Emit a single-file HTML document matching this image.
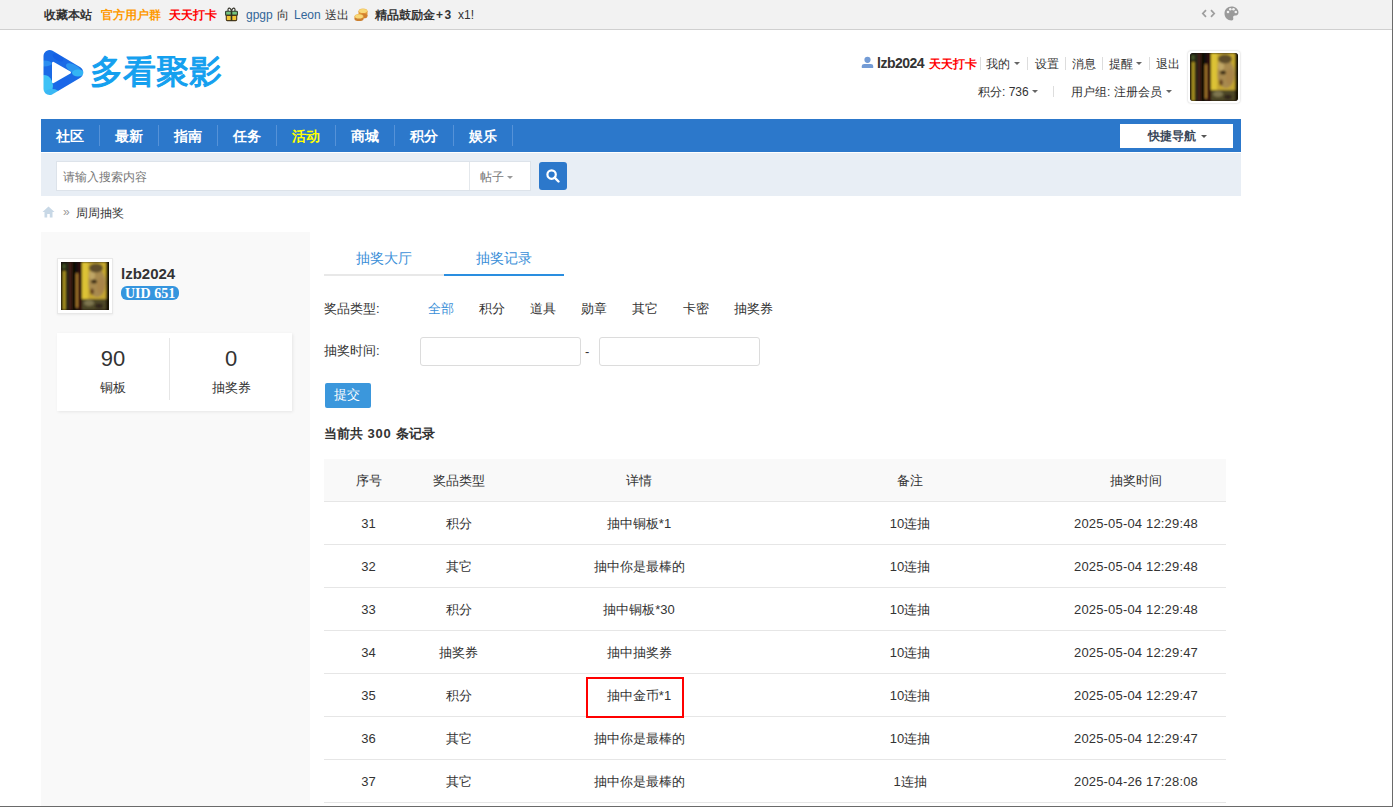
<!DOCTYPE html>
<html><head><meta charset="utf-8">
<style>
*{box-sizing:border-box}
html,body{margin:0;padding:0}
body{width:1393px;height:807px;overflow:hidden;position:relative;background:#fff;font-family:"Liberation Sans",sans-serif;font-size:12px;color:#333}
.a{position:absolute;white-space:nowrap}
.t12{font-size:12px;line-height:12px}
.t13{font-size:13px;line-height:13px}
.t14{font-size:14px;line-height:14px}
.b{font-weight:bold}
/* frame */
#rb{position:absolute;left:1392px;top:0;width:1px;height:807px;background:#6a6a6a}
#bb{position:absolute;left:0;top:806px;width:1393px;height:1px;background:#6a6a6a}
/* top bar */
#top{position:absolute;left:0;top:0;width:1392px;height:30px;background:#f2f2f2;border-bottom:1px solid #d0d0d0}
/* nav */
#nav{position:absolute;left:41px;top:119px;width:1200px;height:33px;background:#2c78cb}
#nav .i{position:absolute;top:10px;font-size:14px;line-height:14px;font-weight:bold;color:#fff}
#nav .s{position:absolute;top:6px;width:1px;height:21px;background:#5592d8}
#srch{position:absolute;left:41px;top:153px;width:1200px;height:43px;background:#e8eef5}
#side{position:absolute;left:41px;top:232px;width:269px;height:574px;background:#f9f9f9}
.caret{position:absolute;width:0;height:0;border-left:3px solid transparent;border-right:3px solid transparent;border-top:3px solid #666}
.sep{position:absolute;width:1px;background:#ddd}
.av{position:absolute;background:
 radial-gradient(ellipse 9px 15px at 34px 20px,#b89858 0%,#a88848 60%,rgba(160,130,60,0) 100%),
 linear-gradient(180deg,rgba(0,0,0,0) 70%,rgba(60,50,20,.8) 100%),
 linear-gradient(90deg,#120c06 0,#120c06 3px,#c9a422 3px,#c9a422 6px,#1c2410 6px,#1c2410 9px,#3a1a10 9px,#3a1a10 14px,#b5782a 14px,#b5782a 16px,#2a120a 16px,#2a120a 21px,#c8a428 21px,#d4b43a 30px,#b09040 40px,#1a1208 46px,#1a1208 48px)}
/* table */
.tr{position:absolute;left:324px;width:902px;height:43px;border-bottom:1px solid #e6e6e6}
.td{position:absolute;top:15px;font-size:13px;line-height:13px;color:#333;text-align:center}
</style></head><body>
<svg width="0" height="0" style="position:absolute"><defs>
<filter id="bl" x="0" y="0" width="1" height="1"><feGaussianBlur stdDeviation="0.8"/></filter>
<symbol id="avs" viewBox="0 0 48 48"><rect width="48" height="48" fill="#150c08"/><g filter="url(#bl)">
<rect width="48" height="48" fill="#150c08"/>
<rect x="2" y="9" width="2.6" height="39" fill="#b49c24"/>
<rect x="1.5" y="2" width="3" height="5" fill="#4a5a28"/>
<rect x="5" y="0" width="2.5" height="48" fill="#202818"/>
<rect x="7.5" y="0" width="3.5" height="48" fill="#3c1a12"/>
<rect x="11" y="0" width="3.5" height="48" fill="#0a0806"/>
<rect x="15" y="11" width="2.2" height="35" rx="1.1" fill="#a8782c"/>
<rect x="17.5" y="0" width="3.5" height="48" fill="#301008"/>
<rect x="21" y="0" width="24" height="48" fill="#c4a632"/>
<rect x="21" y="0" width="6" height="42" fill="#dcc234"/>
<rect x="40" y="0" width="5" height="32" fill="#c8aa2e"/>
<ellipse cx="36" cy="21" rx="8.5" ry="14" fill="#a88a50"/>
<ellipse cx="31" cy="13" rx="3" ry="5" fill="#c0a666"/>
<ellipse cx="35" cy="6" rx="7" ry="4.5" fill="#5e4e2a"/>
<ellipse cx="33" cy="19.5" rx="3" ry="2" fill="#3e2e16"/>
<ellipse cx="31" cy="29.5" rx="2" ry="3" fill="#6a4a22"/>
<ellipse cx="40" cy="24" rx="4" ry="8" fill="#a88448"/>
<rect x="21" y="37" width="24" height="11" fill="#4e4628"/>
<ellipse cx="28" cy="41" rx="5" ry="3" fill="#7e7650"/>
<ellipse cx="38" cy="44" rx="4" ry="2.5" fill="#30281a"/>
<rect x="45" y="0" width="3" height="48" fill="#120a06"/>
</g></symbol></defs></svg>
<div id="top"></div>
<div id="rb"></div><div id="bb"></div>

<!-- top bar content -->
<div class="a t12 b" style="left:44px;top:9px;color:#333">收藏本站</div>
<div class="a t12 b" style="left:101px;top:9px;color:#f90">官方用户群</div>
<div class="a t12 b" style="left:169px;top:9px;color:#f00">天天打卡</div>
<svg class="a" style="left:225px;top:7px" width="13" height="15" viewBox="0 0 13 15">
 <path d="M3.2 4.2 C2.5 2 3.5 1 4.5 1.2 C5.5 1.4 6.2 3 6.5 4.2 C6.8 3 7.5 1.4 8.5 1.2 C9.5 1 10.5 2 9.8 4.2" fill="#fff" stroke="#3a3a30" stroke-width="1.2"/>
 <rect x="0.6" y="4.2" width="11.8" height="4.2" rx="0.8" fill="#72c37e" stroke="#2f3a2a" stroke-width="1.1"/>
 <path d="M1.3 8.4 L11.7 8.4 L11.7 12.6 Q11.7 13.6 10.7 13.6 L2.3 13.6 Q1.3 13.6 1.3 12.6 Z" fill="#f2c636" stroke="#4a3a1a" stroke-width="1.1"/>
 <rect x="5.7" y="4" width="1.6" height="9.8" fill="#2f3424"/>
</svg>
<div class="a t12" style="left:246px;top:9px;color:#336699">gpgp</div>
<div class="a t12" style="left:277px;top:9px;color:#333">向</div>
<div class="a t12" style="left:294px;top:9px;color:#336699">Leon</div>
<div class="a t12" style="left:325px;top:9px;color:#333">送出</div>
<svg class="a" style="left:354px;top:8px" width="14" height="13" viewBox="0 0 14 13">
 <ellipse cx="9" cy="3" rx="4.5" ry="2.5" fill="#eeb850"/>
 <rect x="4.5" y="3" width="9" height="5" fill="#e39838"/>
 <ellipse cx="9" cy="8" rx="4.5" ry="2.5" fill="#d08030"/>
 <ellipse cx="9" cy="3" rx="4" ry="2" fill="#f8d878"/>
 <ellipse cx="5" cy="8.5" rx="4.5" ry="2.5" fill="#eeb850"/>
 <rect x="0.5" y="8.5" width="9" height="2.5" fill="#e39838"/>
 <ellipse cx="5" cy="11" rx="4.5" ry="2" fill="#cc8030"/>
 <ellipse cx="5" cy="8.5" rx="4" ry="2" fill="#f8d878"/>
</svg>
<div class="a t12 b" style="left:375px;top:9px;color:#333">精品鼓励金<span style="letter-spacing:1.5px;margin-left:1px">+3</span></div>
<div class="a t12" style="left:458px;top:9px;color:#333">x1!</div>
<!-- top right icons -->
<svg class="a" style="left:1201px;top:9px" width="15" height="9" viewBox="0 0 15 9">
 <path d="M5 1.2 L1.8 4.5 L5 7.8" fill="none" stroke="#9d9d9d" stroke-width="1.7"/>
 <path d="M10 1.2 L13.2 4.5 L10 7.8" fill="none" stroke="#9d9d9d" stroke-width="1.7"/>
</svg>
<svg class="a" style="left:1224px;top:6px" width="15" height="15" viewBox="0 0 15 15">
 <path d="M7.5 0.5 C11.5 0.5 14.5 3.2 14.5 6.5 C14.5 9 12.5 9.5 11 9.5 C9.5 9.5 8.8 10.5 9.2 11.8 C9.6 13.2 9 14.5 7.5 14.5 C3.5 14.5 0.5 11.5 0.5 7.5 C0.5 3.5 3.5 0.5 7.5 0.5 Z" fill="#9a9a9a"/>
 <circle cx="4" cy="6" r="1.3" fill="#f2f2f2"/>
 <circle cx="6.3" cy="3.3" r="1.3" fill="#f2f2f2"/>
 <circle cx="9.5" cy="3.3" r="1.3" fill="#f2f2f2"/>
 <circle cx="11.8" cy="6" r="1.3" fill="#f2f2f2"/>
</svg>

<!-- logo -->
<svg class="a" style="left:38px;top:45px" width="52" height="55" viewBox="0 0 52 55">
 <defs>
  <mask id="lm"><polygon points="11.5,11 11.5,44 39.3,27.5" fill="#fff" stroke="#fff" stroke-width="12" stroke-linejoin="round"/><polygon points="15.2,18 15.2,37 31.8,27.5" fill="#000" stroke="#000" stroke-width="2.4" stroke-linejoin="round"/></mask>
 </defs>
 <g mask="url(#lm)">
  <rect x="0" y="0" width="52" height="55" fill="#1a6ae6"/>
  <ellipse cx="36" cy="24" rx="9" ry="4" fill="#2a96f0" transform="rotate(30 36 24)"/>
  <ellipse cx="40" cy="28" rx="6" ry="3.5" fill="#34b4f4"/>
  <ellipse cx="6" cy="18.5" rx="8" ry="3" fill="#2b8ef0"/>
  <ellipse cx="6" cy="41" rx="9" ry="11" fill="#3ec2f6"/>
  <ellipse cx="14" cy="49" rx="8" ry="5" fill="#3ab8f4"/>
  <ellipse cx="25" cy="38" rx="7" ry="4" fill="#1a66e8" transform="rotate(-30 25 38)"/>
  <ellipse cx="20" cy="12.5" rx="6" ry="3" fill="#1560e4" transform="rotate(30 20 12.5)"/>
 </g>
</svg>
<svg class="a" style="left:80px;top:45px" width="160" height="50"><text x="9.5" y="37.5" font-family="Liberation Sans, sans-serif" font-size="33" font-weight="400" fill="#14a0ef" stroke="#14a0ef" stroke-width="1.1" stroke-linejoin="round" stroke-linecap="round">多看聚影</text></svg>

<!-- header right -->
<svg class="a" style="left:860px;top:55px" width="15" height="14" viewBox="0 0 15 14">
 <circle cx="7.5" cy="4.8" r="3.1" fill="#739bd5"/>
 <path d="M1.8 13 L1.8 11.2 C1.8 9.8 2.8 9 4.2 9 L10.8 9 C12.2 9 13.2 9.8 13.2 11.2 L13.2 13 Z" fill="#739bd5"/>
</svg>
<div class="a b" style="left:877px;top:56px;font-size:14px;line-height:14px;letter-spacing:-0.5px;color:#333">lzb2024</div>
<div class="a t12 b" style="left:929px;top:58px;color:#f00">天天打卡</div>
<div class="sep" style="left:980px;top:57px;height:13px"></div>
<div class="a t12" style="left:986px;top:58px;color:#333">我的</div>
<div class="caret" style="left:1014px;top:62px"></div>
<div class="sep" style="left:1027px;top:57px;height:13px"></div>
<div class="a t12" style="left:1035px;top:58px;color:#333">设置</div>
<div class="sep" style="left:1065px;top:57px;height:13px"></div>
<div class="a t12" style="left:1072px;top:58px;color:#333">消息</div>
<div class="sep" style="left:1102px;top:57px;height:13px"></div>
<div class="a t12" style="left:1109px;top:58px;color:#333">提醒</div>
<div class="caret" style="left:1136px;top:62px"></div>
<div class="sep" style="left:1149px;top:57px;height:13px"></div>
<div class="a t12" style="left:1156px;top:58px;color:#333">退出</div>

<div class="a t12" style="left:978px;top:86px;color:#333">积分: 736</div>
<div class="caret" style="left:1032px;top:90px"></div>
<div class="sep" style="left:1053px;top:86px;height:11px"></div>
<div class="a t12" style="left:1071px;top:86px;color:#333">用户组: 注册会员</div>
<div class="caret" style="left:1166px;top:90px"></div>

<div class="a" style="left:1188px;top:51px;width:52px;height:52px;background:#fff;border-radius:3px;box-shadow:0 0 2px rgba(0,0,0,.25)"></div>
<svg class="a" style="left:1190px;top:53px;border-radius:3px" width="48" height="48"><use href="#avs"/></svg>

<!-- nav -->
<div id="nav">
 <div class="i" style="left:15px">社区</div><div class="s" style="left:58px"></div>
 <div class="i" style="left:74px">最新</div><div class="s" style="left:117px"></div>
 <div class="i" style="left:133px">指南</div><div class="s" style="left:176px"></div>
 <div class="i" style="left:192px">任务</div><div class="s" style="left:235px"></div>
 <div class="i" style="left:251px;color:#ff0">活动</div><div class="s" style="left:294px"></div>
 <div class="i" style="left:310px">商城</div><div class="s" style="left:353px"></div>
 <div class="i" style="left:369px">积分</div><div class="s" style="left:412px"></div>
 <div class="i" style="left:428px">娱乐</div><div class="s" style="left:471px"></div>
 <div class="a" style="left:1079px;top:5px;width:113px;height:24px;background:#fff"></div>
 <div class="a t12 b" style="left:1107px;top:11px;color:#3a475a">快捷导航</div>
 <div class="caret" style="left:1160px;top:16px;border-top-color:#555"></div>
</div>

<!-- search -->
<div id="srch">
 <div class="a" style="left:15px;top:8px;width:475px;height:30px;background:#fff;border:1px solid #dde3ea"></div>
 <div class="a" style="left:428px;top:9px;width:1px;height:28px;background:#e4e8ec"></div>
 <div class="a t12" style="left:22px;top:18px;color:#777">请输入搜索内容</div>
 <div class="a t12" style="left:439px;top:18px;color:#777">帖子</div>
 <div class="caret" style="left:466px;top:23px;border-top-color:#999"></div>
 <div class="a" style="left:498px;top:9px;width:28px;height:28px;background:#2c78cb;border-radius:3px"></div>
 <svg class="a" style="left:505px;top:16px" width="14" height="14" viewBox="0 0 14 14">
  <circle cx="5.6" cy="5.6" r="4.2" fill="none" stroke="#fff" stroke-width="2.2"/>
  <path d="M8.6 8.6 L12.5 12.5" stroke="#fff" stroke-width="2.4" stroke-linecap="round"/>
 </svg>
</div>

<!-- breadcrumb -->
<svg class="a" style="left:42px;top:206px" width="13" height="12" viewBox="0 0 13 12">
 <path d="M6.5 0.5 L0.5 6 L2.5 6 L2.5 11.5 L5.2 11.5 L5.2 8 L7.8 8 L7.8 11.5 L10.5 11.5 L10.5 6 L12.5 6 Z" fill="#c8d8e6"/>
</svg>
<div class="a t12" style="left:63px;top:206px;color:#999">»</div>
<div class="a t12" style="left:76px;top:207px;color:#333">周周抽奖</div>

<!-- sidebar -->
<div id="side"></div>
<div class="a" style="left:57px;top:258px;width:56px;height:56px;background:#fff;border:1px solid #e8e8e8;box-shadow:0 1px 2px rgba(0,0,0,.06)"></div>
<svg class="a" style="left:61px;top:262px" width="48" height="48"><use href="#avs"/></svg>
<div class="a b" style="left:121px;top:266px;font-size:15px;line-height:15px;color:#333;font-family:'Liberation Sans',sans-serif">lzb2024</div>
<div class="a" style="left:121px;top:286px;width:58px;height:14px;background:#3595de;border-radius:6px"></div>
<div class="a b" style="left:125px;top:287px;font-size:14px;line-height:14px;color:#fff;font-family:'Liberation Serif',serif">UID 651</div>

<div class="a" style="left:57px;top:333px;width:235px;height:78px;background:#fff;box-shadow:1px 1px 3px rgba(0,0,0,.08)"></div>
<div class="a" style="left:169px;top:338px;width:1px;height:62px;background:#e6e6e6"></div>
<div class="a" style="left:57px;top:348px;width:112px;text-align:center;font-size:22px;line-height:22px;color:#333">90</div>
<div class="a t13" style="left:57px;top:381px;width:112px;text-align:center;color:#333">铜板</div>
<div class="a" style="left:170px;top:348px;width:122px;text-align:center;font-size:22px;line-height:22px;color:#333">0</div>
<div class="a t13" style="left:170px;top:381px;width:122px;text-align:center;color:#333">抽奖券</div>

<!-- tabs -->
<div class="a" style="left:324px;top:274px;width:120px;height:2px;background:#e8e8e8"></div>
<div class="a" style="left:444px;top:274px;width:120px;height:2px;background:#2a8ee0"></div>
<div class="a t14" style="left:324px;top:251px;width:120px;text-align:center;color:#3b8fd8">抽奖大厅</div>
<div class="a t14" style="left:444px;top:251px;width:120px;text-align:center;color:#3b8fd8">抽奖记录</div>

<!-- filters -->
<div class="a t13" style="left:324px;top:302px;color:#333">奖品类型:</div>
<div class="a t13" style="left:428px;top:302px;color:#3b8fd8">全部</div>
<div class="a t13" style="left:479px;top:302px;color:#333">积分</div>
<div class="a t13" style="left:530px;top:302px;color:#333">道具</div>
<div class="a t13" style="left:581px;top:302px;color:#333">勋章</div>
<div class="a t13" style="left:632px;top:302px;color:#333">其它</div>
<div class="a t13" style="left:683px;top:302px;color:#333">卡密</div>
<div class="a t13" style="left:734px;top:302px;color:#333">抽奖券</div>

<div class="a t13" style="left:324px;top:344px;color:#333">抽奖时间:</div>
<div class="a" style="left:420px;top:337px;width:161px;height:29px;border:1px solid #dcdcdc;border-radius:3px;background:#fff"></div>
<div class="a t13" style="left:585px;top:345px;color:#333">-</div>
<div class="a" style="left:599px;top:337px;width:161px;height:29px;border:1px solid #dcdcdc;border-radius:3px;background:#fff"></div>
<div class="a" style="left:325px;top:383px;width:46px;height:25px;background:#3b97dc;border-radius:2px"></div>
<div class="a t13" style="left:324px;top:388px;width:46px;text-align:center;color:#fff">提交</div>
<div class="a t13 b" style="left:324px;top:427px;color:#333">当前共<span style="letter-spacing:0.8px"> 300 </span>条记录</div>

<!-- table -->
<div class="a" style="left:324px;top:459px;width:902px;height:43px;background:#f9f9f9;border-bottom:1px solid #e6e6e6"></div>
<div class="a t13" style="left:324px;top:474px;width:89px;text-align:center">序号</div>
<div class="a t13" style="left:413px;top:474px;width:91px;text-align:center">奖品类型</div>
<div class="a t13" style="left:504px;top:474px;width:270px;text-align:center">详情</div>
<div class="a t13" style="left:774px;top:474px;width:272px;text-align:center">备注</div>
<div class="a t13" style="left:1046px;top:474px;width:180px;text-align:center">抽奖时间</div>
<!-- rows -->
<div class="tr" style="top:502px"><div class="td" style="left:0px;width:89px">31</div><div class="td" style="left:89px;width:91px">积分</div><div class="td" style="left:180px;width:270px">抽中铜板*1</div><div class="td" style="left:450px;width:272px">10连抽</div><div class="td" style="left:722px;width:180px;letter-spacing:0.17px">2025-05-04 12:29:48</div></div>
<div class="tr" style="top:545px"><div class="td" style="left:0px;width:89px">32</div><div class="td" style="left:89px;width:91px">其它</div><div class="td" style="left:180px;width:270px">抽中你是最棒的</div><div class="td" style="left:450px;width:272px">10连抽</div><div class="td" style="left:722px;width:180px;letter-spacing:0.17px">2025-05-04 12:29:48</div></div>
<div class="tr" style="top:588px"><div class="td" style="left:0px;width:89px">33</div><div class="td" style="left:89px;width:91px">积分</div><div class="td" style="left:180px;width:270px">抽中铜板*30</div><div class="td" style="left:450px;width:272px">10连抽</div><div class="td" style="left:722px;width:180px;letter-spacing:0.17px">2025-05-04 12:29:48</div></div>
<div class="tr" style="top:631px"><div class="td" style="left:0px;width:89px">34</div><div class="td" style="left:89px;width:91px">抽奖券</div><div class="td" style="left:180px;width:270px">抽中抽奖券</div><div class="td" style="left:450px;width:272px">10连抽</div><div class="td" style="left:722px;width:180px;letter-spacing:0.17px">2025-05-04 12:29:47</div></div>
<div class="tr" style="top:674px"><div class="td" style="left:0px;width:89px">35</div><div class="td" style="left:89px;width:91px">积分</div><div class="td" style="left:180px;width:270px">抽中金币*1</div><div class="td" style="left:450px;width:272px">10连抽</div><div class="td" style="left:722px;width:180px;letter-spacing:0.17px">2025-05-04 12:29:47</div></div>
<div class="tr" style="top:717px"><div class="td" style="left:0px;width:89px">36</div><div class="td" style="left:89px;width:91px">其它</div><div class="td" style="left:180px;width:270px">抽中你是最棒的</div><div class="td" style="left:450px;width:272px">10连抽</div><div class="td" style="left:722px;width:180px;letter-spacing:0.17px">2025-05-04 12:29:47</div></div>
<div class="tr" style="top:760px"><div class="td" style="left:0px;width:89px">37</div><div class="td" style="left:89px;width:91px">其它</div><div class="td" style="left:180px;width:270px">抽中你是最棒的</div><div class="td" style="left:450px;width:272px">1连抽</div><div class="td" style="left:722px;width:180px;letter-spacing:0.17px">2025-04-26 17:28:08</div></div>
<div class="a" style="left:586px;top:677px;width:98px;height:41px;border:2px solid #f00"></div>
</body></html>
